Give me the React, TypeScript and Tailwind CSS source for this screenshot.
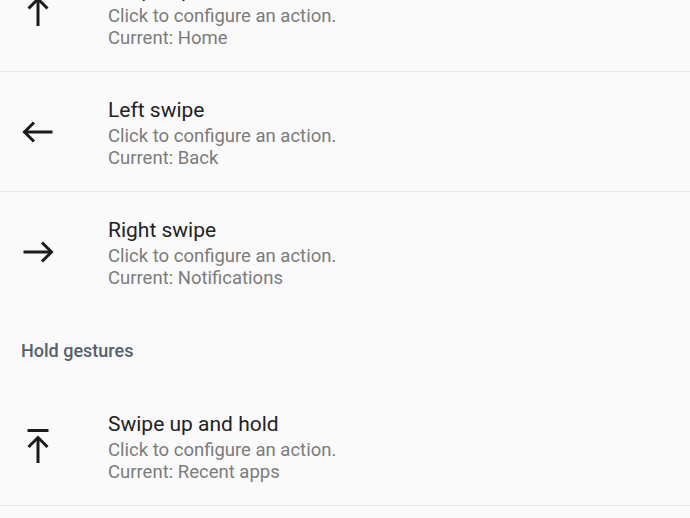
import React from "react";

type Gesture = {
  title: string;
  current: string;
  icon: React.ReactNode;
  divider?: boolean;
};

const ArrowUp = () => (
  <svg width="40" height="40" viewBox="0 0 40 40" fill="none" stroke="#1b1b1b" strokeWidth="3">
    <path d="M20 7 V34" />
    <path d="M10.5 16.5 L20 7 L29.5 16.5" />
  </svg>
);

const ArrowLeft = () => (
  <svg width="40" height="40" viewBox="0 0 40 40" fill="none" stroke="#1b1b1b" strokeWidth="3">
    <path d="M7 20 H34.5" />
    <path d="M16 10.5 L6.5 20 L16 29.5" />
  </svg>
);

const ArrowRight = () => (
  <svg width="40" height="40" viewBox="0 0 40 40" fill="none" stroke="#1b1b1b" strokeWidth="3">
    <path d="M5.5 20 H33" />
    <path d="M24 10.5 L33.5 20 L24 29.5" />
  </svg>
);

const ArrowUpBar = () => (
  <svg width="40" height="40" viewBox="0 0 40 40" fill="none" stroke="#1b1b1b" strokeWidth="3">
    <path d="M9.5 4.5 H30.5" />
    <path d="M20 12 V37" />
    <path d="M10.5 21 L20 11.5 L29.5 21" />
  </svg>
);

function GestureRow({ title, current, icon, divider = true }: Gesture) {
  return (
    <div className={`flex h-[120px] ${divider ? "border-b border-[#e4e4e4]" : ""}`}>
      <div className="ml-[18px] flex w-[40px] shrink-0 items-center justify-center self-center">{icon}</div>
      <div className="ml-[50px] flex flex-col pt-[25px]">
        <div className="text-[21px] leading-[26px] text-[#222222]">{title}</div>
        <div className="mt-[2px] text-[18.5px] leading-[22px] text-[#7c7c7c]">Click to configure an action.</div>
        <div className="text-[18.5px] leading-[22px] text-[#7c7c7c]">Current: {current}</div>
      </div>
    </div>
  );
}

export default function App() {
  return (
    <div
      className="h-[518px] w-full overflow-hidden bg-[#fafafa]"
      style={{ fontFamily: "Roboto, 'Noto Sans', sans-serif" }}
    >
      <div className="-mt-[48px]">
        <GestureRow title="Swipe up" current="Home" icon={<ArrowUp />} />
        <GestureRow title="Left swipe" current="Back" icon={<ArrowLeft />} />
        <GestureRow title="Right swipe" current="Notifications" icon={<ArrowRight />} divider={false} />

        <div className="flex h-[74px] items-start pl-[21px] pt-[28px]">
          <span className="text-[18px] font-medium leading-[22px] text-[#52616b]">Hold gestures</span>
        </div>

        <GestureRow title="Swipe up and hold" current="Recent apps" icon={<ArrowUpBar />} />
      </div>
    </div>
  );
}
